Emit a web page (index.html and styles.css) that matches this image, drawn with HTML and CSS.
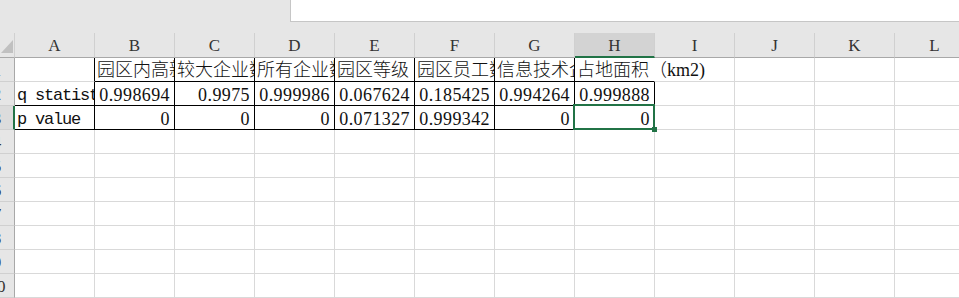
FILE: index.html
```html
<!DOCTYPE html>
<html lang="zh-CN">
<head>
  <meta charset="UTF-8">
  <title>Sheet1</title>
  <link rel="stylesheet" href="styles.css">
</head>
<body>
  <div class="book">
    <!-- name box + formula bar strip -->
    <div class="topbar">
      <div class="namebox"></div>
      <div class="formula"></div>
    </div>

    <div class="sheet">
      <div class="row heads">
        <div class="corner"></div>
        <div class="ch">A</div>
        <div class="ch">B</div>
        <div class="ch">C</div>
        <div class="ch">D</div>
        <div class="ch">E</div>
        <div class="ch">F</div>
        <div class="ch">G</div>
        <div class="ch on">H</div>
        <div class="ch">I</div>
        <div class="ch">J</div>
        <div class="ch">K</div>
        <div class="ch">L</div>
      </div>

      <div class="row">
        <div class="rh"><span>1</span></div>
        <div class="c br"></div>
        <div class="c zh br bb">园区内高新技术企业数</div>
        <div class="c zh br bb">较大企业数量</div>
        <div class="c zh br bb">所有企业数量</div>
        <div class="c zh br bb">园区等级</div>
        <div class="c zh br bb">园区员工数</div>
        <div class="c zh br bb">信息技术企业数</div>
        <div class="c zh bb spill">占地面积（km2)</div>
        <div class="c"></div>
        <div class="c"></div>
        <div class="c"></div>
        <div class="c"></div>
      </div>

      <div class="row">
        <div class="rh"><span>2</span></div>
        <div class="c br bb">q statistic</div>
        <div class="c n br bb">0.998694</div>
        <div class="c n br bb">0.9975</div>
        <div class="c n br bb">0.999986</div>
        <div class="c n br bb">0.067624</div>
        <div class="c n br bb">0.185425</div>
        <div class="c n br bb">0.994264</div>
        <div class="c n br bb">0.999888</div>
        <div class="c"></div>
        <div class="c"></div>
        <div class="c"></div>
        <div class="c"></div>
      </div>

      <div class="row">
        <div class="rh on"><span>3</span></div>
        <div class="c br bb">p value</div>
        <div class="c n br bb">0</div>
        <div class="c n br bb">0</div>
        <div class="c n br bb">0</div>
        <div class="c n br bb">0.071327</div>
        <div class="c n br bb">0.999342</div>
        <div class="c n br bb">0</div>
        <div class="c n br bb cur">0<div class="sel"></div></div>
        <div class="c"></div>
        <div class="c"></div>
        <div class="c"></div>
        <div class="c"></div>
      </div>

      <div class="row">
        <div class="rh"><span>4</span></div>
        <div class="c"></div><div class="c"></div><div class="c"></div><div class="c"></div>
        <div class="c"></div><div class="c"></div><div class="c"></div><div class="c"></div>
        <div class="c"></div><div class="c"></div><div class="c"></div><div class="c"></div>
      </div>
      <div class="row">
        <div class="rh"><span>5</span></div>
        <div class="c"></div><div class="c"></div><div class="c"></div><div class="c"></div>
        <div class="c"></div><div class="c"></div><div class="c"></div><div class="c"></div>
        <div class="c"></div><div class="c"></div><div class="c"></div><div class="c"></div>
      </div>
      <div class="row">
        <div class="rh"><span>6</span></div>
        <div class="c"></div><div class="c"></div><div class="c"></div><div class="c"></div>
        <div class="c"></div><div class="c"></div><div class="c"></div><div class="c"></div>
        <div class="c"></div><div class="c"></div><div class="c"></div><div class="c"></div>
      </div>
      <div class="row">
        <div class="rh"><span>7</span></div>
        <div class="c"></div><div class="c"></div><div class="c"></div><div class="c"></div>
        <div class="c"></div><div class="c"></div><div class="c"></div><div class="c"></div>
        <div class="c"></div><div class="c"></div><div class="c"></div><div class="c"></div>
      </div>
      <div class="row">
        <div class="rh"><span>8</span></div>
        <div class="c"></div><div class="c"></div><div class="c"></div><div class="c"></div>
        <div class="c"></div><div class="c"></div><div class="c"></div><div class="c"></div>
        <div class="c"></div><div class="c"></div><div class="c"></div><div class="c"></div>
      </div>
      <div class="row">
        <div class="rh"><span>9</span></div>
        <div class="c"></div><div class="c"></div><div class="c"></div><div class="c"></div>
        <div class="c"></div><div class="c"></div><div class="c"></div><div class="c"></div>
        <div class="c"></div><div class="c"></div><div class="c"></div><div class="c"></div>
      </div>
      <div class="row">
        <div class="rh"><span>10</span></div>
        <div class="c"></div><div class="c"></div><div class="c"></div><div class="c"></div>
        <div class="c"></div><div class="c"></div><div class="c"></div><div class="c"></div>
        <div class="c"></div><div class="c"></div><div class="c"></div><div class="c"></div>
      </div>
    </div>
  </div>
</body>
</html>
```

FILE: styles.css
```css
/* Spreadsheet colours */
:root {
  --chrome: #e6e6e6;      /* headers and toolbar strip */
  --chrome-on: #d3d3d3;   /* header of the active column */
  --edge: #c6c6c6;        /* formula bar outline */
  --head-line: #a8a8a8;   /* line under the column headers */
  --sep: #d0d0d0;         /* separators between header cells */
  --grid: #d9d9d9;        /* cell gridlines */
  --ink: #111;
  --accent: #217346;      /* selection green */
}

* {
  margin: 0;
  padding: 0;
  box-sizing: border-box;
}

body {
  background: #fff;
  color: var(--ink);
  font-family: "Liberation Mono", "Noto Sans CJK SC", monospace;
  width: 959px;
  height: 298px;
  overflow: hidden;
}

/* Toolbar strip with the formula box */
.topbar {
  display: flex;
  height: 33px;
  background: var(--chrome);
}
.namebox {
  width: 290px;
  flex: none;
}
.formula {
  flex: 1;
  height: 22px;
  background: #fff;
  border-left: 1px solid var(--edge);
  border-bottom: 1px solid var(--edge);
}

.row {
  display: flex;
  height: 24px;
}
.heads {
  height: 25px;
}

/* Select-all corner */
.corner {
  flex: none;
  width: 15px;
  background: var(--chrome);
  border-right: 1px solid var(--sep);
  border-bottom: 1px solid var(--head-line);
  display: flex;
  align-items: flex-end;
  justify-content: flex-end;
  padding: 0 1px 4px 0;
}
.corner::after {
  content: "";
  border-left: 12px solid transparent;
  border-bottom: 13px solid #c0c0c0;
}

/* Column headers */
.ch {
  flex: none;
  width: 80px;
  background: var(--chrome);
  border-right: 1px solid var(--sep);
  border-bottom: 1px solid var(--head-line);
  font: 17px "Liberation Serif", serif;
  color: #333;
  text-align: center;
  line-height: 26px;
}
.ch.on {
  background: var(--chrome-on);
  border-bottom: 2px solid var(--accent);
  line-height: 25px;
}

/* Row headers (scrolled so only the right edge shows) */
.rh {
  flex: none;
  width: 15px;
  background: var(--chrome);
  border-right: 1px solid var(--head-line);
  border-bottom: 1px solid var(--sep);
  overflow: hidden;
  font: 17px "Liberation Serif", serif;
  color: #333;
  line-height: 26px;
}
.rh span {
  display: block;
  width: 30px;
  margin-left: -18px;
  text-align: center;
}
.rh.on {
  background: #dcdcdc;
  border-right: 2px solid var(--accent);
}

/* Cells */
.c {
  flex: none;
  width: 80px;
  border-right: 1px solid var(--grid);
  border-bottom: 1px solid var(--grid);
  white-space: nowrap;
  overflow: hidden;
  padding: 0 2px;
  font-size: 17px;
  letter-spacing: -1.2px;
  line-height: 28px;
}
.zh {
  font: 300 18px "Liberation Serif", "Noto Sans CJK SC", serif;
  letter-spacing: 0;
  line-height: 25px;
}
.n {
  font-family: "Liberation Serif", serif;
  font-size: 18px;
  letter-spacing: 0.4px;
  text-align: right;
  padding-right: 4px;
  line-height: 27px;
}
.br {
  border-right-color: #000;
}
.bb {
  border-bottom-color: #000;
}

/* Text running on into the empty neighbour */
.spill {
  overflow: visible;
  border-right-color: transparent;
  position: relative;
  z-index: 1;
}

/* Active cell frame and fill handle */
.cur {
  position: relative;
  overflow: visible;
}
.sel {
  position: absolute;
  left: -2px;
  top: -2px;
  right: -1px;
  bottom: -1px;
  border: 2px solid var(--accent);
  z-index: 2;
}
.sel::after {
  content: "";
  position: absolute;
  right: -4px;
  bottom: -4px;
  width: 5px;
  height: 5px;
  background: var(--accent);
}
```
